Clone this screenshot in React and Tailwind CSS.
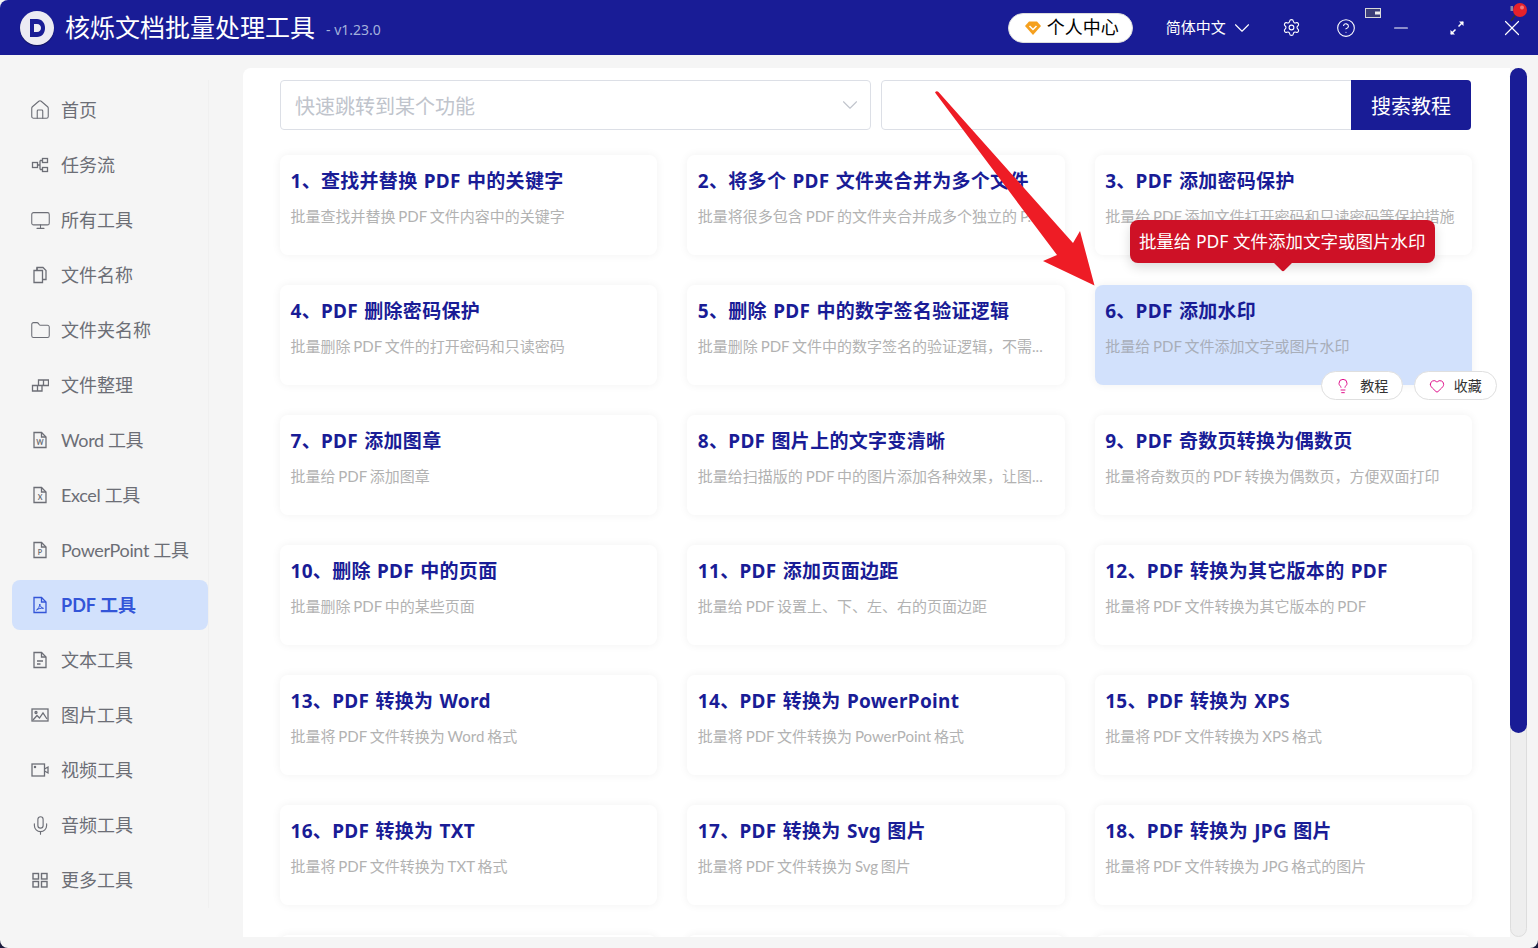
import React from "react";
import { ChevronDown, CircleHelp, Heart, House, Lightbulb, Minus, Monitor, Folder, Mic, Settings, X } from "lucide-react";

const FONT = "[font-family:'Noto_Sans','Noto_Sans_CJK_SC',sans-serif]";

const FileIcon = ({ label, lines }) => (
    <svg width="18" height="18" viewBox="0 0 18 18" fill="none" stroke="currentColor" strokeWidth="1.3">
        <path d="M3 1.5h7.5L15 6v10.5H3z" />
        <path d="M10.5 1.5V6H15" />
        {label && (
            <text x="9" y="13.5" textAnchor="middle" fontSize="7" fontWeight="700" fill="currentColor" stroke="none">
                {label}
            </text>
        )}
        {lines && <path d="M6 10h6M6 13h3.5" />}
    </svg>
);

const PdfIcon = () => (
    <svg width="18" height="18" viewBox="0 0 18 18" fill="none" stroke="currentColor" strokeWidth="1.3">
        <path d="M3 1.5h7.5L15 6v10.5H3z" />
        <path d="M10.5 1.5V6H15" />
        <path d="M5.5 14c2-1 3-3.500 3.300-6 .4 2.500 1.500 3.800 3.700 4.300-2.500-.3-5 .2-7 1.700z" strokeWidth="1" />
    </svg>
);

const FlowIcon = () => (
    <svg width="18" height="18" viewBox="0 0 18 18" fill="none" stroke="currentColor" strokeWidth="1.3">
        <rect x="1.500" y="6.500" width="5" height="5" />
        <rect x="11.500" y="2.500" width="5" height="4" />
        <rect x="11.500" y="11.500" width="5" height="4" />
        <path d="M6.500 9h2.500M9 4.500V13.500M9 4.500h2.500M9 13.500h2.500" />
    </svg>
);

const CopyFileIcon = () => (
    <svg width="18" height="18" viewBox="0 0 18 18" fill="none" stroke="currentColor" strokeWidth="1.3">
        <path d="M3 4.500h8.500v12H3z" />
        <path d="M6 4.500V1.500h6L15 4.500v9h-3.500" />
        <path d="M6 1.500v3" />
    </svg>
);

const ArrangeIcon = () => (
    <svg width="18" height="18" viewBox="0 0 18 18" fill="none" stroke="currentColor" strokeWidth="1.3">
        <path d="M1.500 9.500h9.500v5.500H1.500zM6.500 9.500v5.500" />
        <path d="M7.500 9.500V4h10v5.500H11M12.500 4v5.500" />
    </svg>
);

const PictureIcon = () => (
    <svg width="18" height="18" viewBox="0 0 18 18" fill="none" stroke="currentColor" strokeWidth="1.300">
        <rect x="1" y="3" width="16" height="12" />
        <circle cx="5" cy="6.500" r="1" />
        <path d="M2 14l4-4.500 2.500 2.500 3.500-5 4 6" />
    </svg>
);

const VideoIcon = () => (
    <svg width="18" height="18" viewBox="0 0 18 18" fill="none" stroke="currentColor" strokeWidth="1.3">
        <rect x="1" y="3" width="12.500" height="12" />
        <path d="M13.500 8l3.500-2v6l-3.500-2" />
        <circle cx="4" cy="6" r=".6" fill="currentColor" />
    </svg>
);

const GridIcon = () => (
    <svg width="18" height="18" viewBox="0 0 18 18" fill="none" stroke="currentColor" strokeWidth="1.4">
        <rect x="2" y="2.500" width="5.500" height="5.500" />
        <rect x="10.500" y="2.500" width="5.500" height="5.500" />
        <rect x="2" y="10.500" width="5.500" height="5.500" />
        <rect x="10.500" y="10.500" width="5.500" height="5.500" />
    </svg>
);

const NAV = [
    { label: "首页", icon: <House size={22} strokeWidth={1.2} className="-mx-[2px]" /> },
    { label: "任务流", icon: <FlowIcon /> },
    { label: "所有工具", icon: <Monitor size={21} strokeWidth={1.2} className="-mx-[1.5px]" /> },
    { label: "文件名称", icon: <CopyFileIcon /> },
    { label: "文件夹名称", icon: <Folder size={21} strokeWidth={1.2} className="-mx-[1.5px]" /> },
    { label: "文件整理", icon: <ArrangeIcon /> },
    { label: "Word 工具", icon: <FileIcon label="W" />, tight: true },
    { label: "Excel 工具", icon: <FileIcon label="X" />, tight: true },
    { label: "PowerPoint 工具", icon: <FileIcon label="P" />, tight: true },
    { label: "PDF 工具", icon: <PdfIcon />, active: true },
    { label: "文本工具", icon: <FileIcon lines /> },
    { label: "图片工具", icon: <PictureIcon /> },
    { label: "视频工具", icon: <VideoIcon /> },
    { label: "音频工具", icon: <Mic size={21} strokeWidth={1.3} className="-mx-[1.5px]" /> },
    { label: "更多工具", icon: <GridIcon /> },
];

const CARDS = [
    ["1、查找并替换 PDF 中的关键字", "批量查找并替换 PDF 文件内容中的关键字"],
    ["2、将多个 PDF 文件夹合并为多个文件", "批量将很多包含 PDF 的文件夹合并成多个独立的 P..."],
    ["3、PDF 添加密码保护", "批量给 PDF 添加文件打开密码和只读密码等保护措施"],
    ["4、PDF 删除密码保护", "批量删除 PDF 文件的打开密码和只读密码"],
    ["5、删除 PDF 中的数字签名验证逻辑", "批量删除 PDF 文件中的数字签名的验证逻辑，不需..."],
    ["6、PDF 添加水印", "批量给 PDF 文件添加文字或图片水印", true],
    ["7、PDF 添加图章", "批量给 PDF 添加图章"],
    ["8、PDF 图片上的文字变清晰", "批量给扫描版的 PDF 中的图片添加各种效果，让图..."],
    ["9、PDF 奇数页转换为偶数页", "批量将奇数页的 PDF 转换为偶数页，方便双面打印"],
    ["10、删除 PDF 中的页面", "批量删除 PDF 中的某些页面"],
    ["11、PDF 添加页面边距", "批量给 PDF 设置上、下、左、右的页面边距"],
    ["12、PDF 转换为其它版本的 PDF", "批量将 PDF 文件转换为其它版本的 PDF"],
    ["13、PDF 转换为 Word", "批量将 PDF 文件转换为 Word 格式"],
    ["14、PDF 转换为 PowerPoint", "批量将 PDF 文件转换为 PowerPoint 格式"],
    ["15、PDF 转换为 XPS", "批量将 PDF 文件转换为 XPS 格式"],
    ["16、PDF 转换为 TXT", "批量将 PDF 文件转换为 TXT 格式"],
    ["17、PDF 转换为 Svg 图片", "批量将 PDF 文件转换为 Svg 图片"],
    ["18、PDF 转换为 JPG 图片", "批量将 PDF 文件转换为 JPG 格式的图片"],
    ["", ""],
    ["", ""],
    ["", ""],
];

const Header = () => (
    <header className="relative flex h-[55px] shrink-0 items-center rounded-tl-lg bg-[#191c96] text-white">
        <div className="ml-5 flex h-[34px] w-[34px] items-center justify-center rounded-full bg-[#ecebf3] shadow-[0_1px_1px_rgba(0,0,0,0.4)]">
            <svg width="18" height="20" viewBox="0 0 18 20">
                <path d="M2 1h7c5 0 8 4 8 9s-3 9-8 9H2z" fill="#191c96" />
                <path d="M6 6h3c2.500 0 4 1.800 4 4s-1.500 4-4 4H6z" fill="#ecebf3" />
            </svg>
        </div>
        <span className="ml-[11px] text-[25px] leading-none">核烁文档批量处理工具</span>
        <span className="ml-[11px] pt-[3px] text-[14px] text-[#a3b1dc]">- v1.23.0</span>

        <div className="ml-[627px] flex h-[30px] w-[125px] items-center rounded-full border border-[#dcdcdc] bg-white pl-4 text-black">
            <svg width="16" height="14" viewBox="0 0 16 14">
                <path d="M4 .5h8L16 5l-8 9-8-9z" fill="#f5a01e" />
                <path d="M4.500 5L8 8.500 11.500 5" fill="none" stroke="#fff" strokeWidth="1.500" />
            </svg>
            <span className="ml-[6px] text-[18px]">个人中心</span>
        </div>
        <span className="ml-[33px] text-[15px]">简体中文</span>
        <ChevronDown size={26} strokeWidth={1} className="ml-[3px]" />
        <Settings size={19} strokeWidth={1.4} className="ml-[27px]" />
        <CircleHelp size={20} strokeWidth={1.3} className="ml-[35px]" />
        <Minus size={22} strokeWidth={1.2} className="ml-[34px]" />
        <svg width="16" height="16" viewBox="0 0 16 16" fill="none" stroke="#fff" strokeWidth="1.500" className="ml-[37px]">
            <path d="M9.500 6.500L14 2M2 14l4.500-4.500" />
            <path d="M10 1.500h4.500V6M1.500 10v4.500H6" fill="#fff" stroke="none" />
        </svg>
        <X size={26} strokeWidth={1.1} className="ml-[34px]" />

        {/* small tray icon and pin sit over the title bar */}
        <svg width="16" height="10" viewBox="0 0 16 10" className="absolute left-[1365px] top-[8px]">
            <rect x=".5" y=".5" width="15" height="9" fill="#3b3d78" stroke="#d8d8d8" />
            <rect x="10" y="3.500" width="5" height="3" fill="#eee" />
        </svg>
        <svg width="20" height="22" viewBox="0 0 20 22" className="absolute left-[1508px] top-[1px]">
            <path d="M3 20l5-7" stroke="#333" strokeWidth="1.500" />
            <circle cx="12" cy="9" r="7" fill="#e5222b" />
            <circle cx="14" cy="6.500" r="2" fill="#f3777c" />
            <path d="M2.500 5h2.500v5H2.500z" fill="#8b8ba8" />
        </svg>
    </header>
);

const Sidebar = () => (
    <aside className="w-[243px] shrink-0">
        <div className="mt-[25px] h-[828px] w-[209px] border-r border-[#f0f0f0] pl-3 pt-[5px]">
            <nav className="flex flex-col gap-[5px]">
                {NAV.map((item) => (
                    <a
                        key={item.label}
                        className={`flex h-[50px] w-[196px] items-center gap-3 rounded-lg pl-[19px] text-[18px] [font-family:'Lato','Noto_Sans_CJK_SC',sans-serif] ${
                            item.active ? "bg-[#d2e1fc] font-bold text-[#3355d8]" : "text-[#6c6e76]"
                        }`}
                    >
                        {item.icon}
                        <span className={`pt-px ${item.tight ? "tracking-[-0.35px]" : ""}`}>{item.label}</span>
                    </a>
                ))}
            </nav>
        </div>
    </aside>
);

const Card = ({ title, desc, hovered }) => (
    <div
        className={`relative h-[100px] rounded-lg pl-[10.5px] pt-[13px] shadow-[0_0_10px_rgba(0,0,0,0.06)] ${
            hovered ? "bg-[#d2e1fc]" : "bg-white"
        }`}
    >
        <h3 className="whitespace-nowrap text-[19px] font-bold leading-[26px] tracking-[0.3px] text-[#191c96] [word-spacing:1px]">{title}</h3>
        <p
            className={`mt-3 whitespace-nowrap text-[15px] leading-5 [font-family:'Lato','Noto_Sans_CJK_SC',sans-serif] [word-spacing:-1px] ${
                hovered ? "text-[#a8aeb9]" : "text-[#b2b2b2]"
            }`}
        >
            {desc}
        </p>
        {hovered && (
            <>
                <div className="absolute -top-[65px] left-[35px] z-10 flex h-[43px] w-[305px] items-center justify-center rounded-lg bg-[#ce1126] text-[17.5px] text-white shadow-[0_4px_12px_rgba(0,0,0,0.15)]">
                    批量给 PDF 文件添加文字或图片水印
                    <span className="absolute left-[146px] top-[35px] h-[14px] w-[14px] rotate-45 rounded-[2px] bg-[#ce1126]"></span>
                </div>
                <div className="absolute left-[226px] top-[86px] z-10 flex gap-[11px]">
                    <button className="flex h-[29px] w-[82px] items-center justify-center gap-[9px] rounded-full border border-[#dfdfdf] bg-white text-[14px] text-[#333]">
                        <Lightbulb size={16} strokeWidth={1.5} className="text-[#e0128c]" />
                        教程
                    </button>
                    <button className="flex h-[29px] w-[83px] items-center justify-center gap-[9px] rounded-full border border-[#dfdfdf] bg-white text-[14px] text-[#333]">
                        <Heart size={16} strokeWidth={1.5} className="text-[#e0128c]" />
                        收藏
                    </button>
                </div>
            </>
        )}
    </div>
);

const App = () => {
    return (
        <div className={`relative h-[948px] w-[1538px] overflow-hidden bg-[#1c1c3e] ${FONT}`}>
            <div className="flex h-full flex-col rounded-b-lg bg-[#f5f5f5]">
                <Header />
                <div className="flex min-h-0 flex-1">
                    <Sidebar />
                    <main className="mt-[13px] mb-[11px] w-[1267px] overflow-hidden rounded-tl-lg bg-white pl-[37px] pr-[38px] pt-3">
                        <div className="mr-px flex gap-[10px]">
                            <div className="flex h-[50px] w-[591px] items-center justify-between rounded border border-[#dcdfe6] pl-[14px] pr-[7px] text-[20px] text-[#c0c4cc]">
                                <span className="pt-1">快速跳转到某个功能</span>
                                <ChevronDown size={26} strokeWidth={1} />
                            </div>
                            <div className="flex h-[50px] flex-1 rounded border border-[#dcdfe6]">
                                <div className="flex-1"></div>
                                <button className="-my-px -mr-px w-[120px] rounded-r bg-[#191c96] pt-1 text-[20px] text-white">搜索教程</button>
                            </div>
                        </div>
                        <div className="mt-[25px] grid grid-cols-3 gap-x-[30px] gap-y-[30px]">
                            {CARDS.map(([title, desc, hovered], i) => (
                                <Card key={i} title={title} desc={desc} hovered={hovered} />
                            ))}
                        </div>
                    </main>
                    <div className="mt-[13px] mb-[11px] w-[17px] shrink-0 rounded-full border border-[#dddddd] bg-[#eeeeee]">
                        <div className="-mx-px -mt-px h-[665px] rounded-full bg-[#191c96]"></div>
                    </div>
                </div>
            </div>

            {/* red annotation arrow drawn over the page */}
            <svg width="1538" height="948" viewBox="0 0 1538 948" className="pointer-events-none absolute left-0 top-0 z-20">
                <path d="M935 92.500Q936.500 90.500 938.500 92L1073 243L1080 231L1094.500 285.500L1043 261L1057 255Z" fill="#ee1c25" />
            </svg>
        </div>
    );
};

export default App;
